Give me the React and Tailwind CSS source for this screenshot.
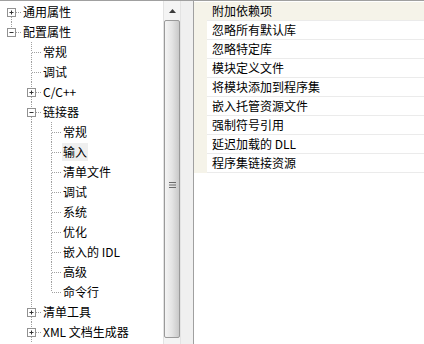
import React from "react";

const tree = [
  { label: "通用属性", level: 0, box: "+", guides: [], top: false, bottom: true },
  { label: "配置属性", level: 0, box: "-", guides: [], top: true, bottom: false },
  { label: "常规", level: 1, guides: [false], top: true, bottom: true },
  { label: "调试", level: 1, guides: [false], top: true, bottom: true },
  { label: "C/C++", level: 1, box: "+", guides: [false], top: true, bottom: true },
  { label: "链接器", level: 1, box: "-", guides: [false], top: true, bottom: true },
  { label: "常规", level: 2, guides: [false, true], top: true, bottom: true },
  { label: "输入", level: 2, guides: [false, true], top: true, bottom: true, selected: true },
  { label: "清单文件", level: 2, guides: [false, true], top: true, bottom: true },
  { label: "调试", level: 2, guides: [false, true], top: true, bottom: true },
  { label: "系统", level: 2, guides: [false, true], top: true, bottom: true },
  { label: "优化", level: 2, guides: [false, true], top: true, bottom: true },
  { label: "嵌入的 IDL", level: 2, guides: [false, true], top: true, bottom: true },
  { label: "高级", level: 2, guides: [false, true], top: true, bottom: true },
  { label: "命令行", level: 2, guides: [false, true], top: true, bottom: false },
  { label: "清单工具", level: 1, box: "+", guides: [false], top: true, bottom: true },
  { label: "XML 文档生成器", level: 1, box: "+", guides: [false], top: true, bottom: true },
];

const props = [
  "附加依赖项",
  "忽略所有默认库",
  "忽略特定库",
  "模块定义文件",
  "将模块添加到程序集",
  "嵌入托管资源文件",
  "强制符号引用",
  "延迟加载的 DLL",
  "程序集链接资源",
];

const dot = { stroke: "#a0a0a0", strokeWidth: 1, strokeDasharray: "1 1" };

// one 20px column of the tree's connector lines
const Guide = ({ line }) => (
  <svg width="20" height="20" className="shrink-0">
    {line && <path d="M10.5 0V20" {...dot} />}
  </svg>
);

const Joint = ({ top, bottom, box }) => (
  <svg width="20" height="20" className="shrink-0">
    {top && <path d="M10.5 0V10" {...dot} />}
    {bottom && <path d="M10.5 11V20" {...dot} />}
    <path d={box ? "M15 10.5H20" : "M11 10.5H20"} {...dot} />
    {box && (
      <g>
        <rect x="6.5" y="6.5" width="8" height="8" fill="#fff" stroke="#919191" />
        <path d="M8.5 10.5H12.5" stroke="#333" />
        {box === "+" && <path d="M10.5 8.5V12.5" stroke="#333" />}
      </g>
    )}
  </svg>
);

const TreeRow = ({ item }) => (
  <div className="flex h-[20px] items-center">
    {item.guides.map((g, i) => (
      <Guide key={i} line={g} />
    ))}
    <Joint top={item.top} bottom={item.bottom} box={item.box} />
    <span
      className={
        "ml-[1px] px-[1px] leading-[18px] whitespace-nowrap " +
        (item.selected ? "bg-[#efefef]" : "")
      }
    >
      {item.label}
    </span>
  </div>
);

export default function App() {
  return (
    <div
      className="flex w-[424px] h-[344px] overflow-hidden bg-white border-t border-[#a0a0a0] text-[12px] text-black"
      style={{ fontFamily: '"Noto Sans CJK SC", "Noto Sans", sans-serif' }}
    >
      <div className="w-[163px] shrink-0 pt-[1px] pl-[1px] overflow-hidden">
        {tree.map((item, i) => (
          <TreeRow key={i} item={item} />
        ))}
      </div>

      {/* vertical scrollbar */}
      <div className="w-[18px] shrink-0 flex flex-col bg-[#f4f4f4] border-x border-[#e3e3e3]">
        <div className="h-[19px] flex items-center justify-center">
          <svg width="7" height="4">
            <path d="M0 4L3.5 0L7 4Z" fill="#3c3c3c" />
          </svg>
        </div>
        <div className="flex-1 mb-[6px] rounded-[2px] border border-[#9a9a9a] bg-gradient-to-r from-[#f4f4f4] via-[#e4e4e4] to-[#c9c9c9] flex items-center justify-center">
          <svg width="7" height="8" className="mb-[-12px]">
            <path d="M0 1.5H7M0 4H7M0 6.5H7" stroke="#6a6a6a" />
          </svg>
        </div>
      </div>

      {/* splitter */}
      <div className="w-[13px] shrink-0 bg-[#f0f0f0] border-r border-[#a0a0a0]" />

      <div className="flex-1 flex flex-col pt-[1px]">
        {props.map((p, i) => (
          <div key={p} className="flex h-[19px]">
            <div className="w-[13px] shrink-0 bg-[#f5f3e9]" />
            <div
              className={
                "flex-1 flex items-center pl-[5px] border-b border-[#ebebeb] whitespace-nowrap " +
                (i === 0 ? "bg-[#f5f3e9]" : "")
              }
            >
              {p}
            </div>
          </div>
        ))}
      </div>
    </div>
  );
}
